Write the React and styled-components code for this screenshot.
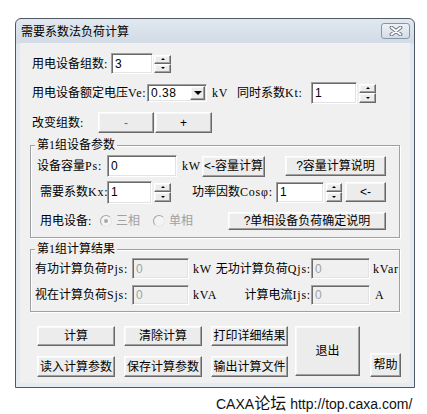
import React from "react";
import styled, { createGlobalStyle, css } from "styled-components";

const GlobalStyle = createGlobalStyle`
  body {
    margin: 0;
    background: #fff;
    font-family: "Liberation Serif", "Noto Sans CJK SC", serif;
  }
`;

const raised = css`
  box-sizing: border-box;
  background: #ececec;
  border: 1px solid;
  border-color: #fff #696969 #696969 #fff;
  box-shadow: inset -1px -1px 0 #a0a0a0, inset 1px 1px 0 #f8f8f8;
`;

const sunken = css`
  box-sizing: border-box;
  border: 1px solid;
  border-color: #a0a0a0 #fff #fff #a0a0a0;
  box-shadow: inset 1px 1px 0 #696969, inset -1px -1px 0 #e3e3e3;
`;

const Page = styled.div`
  width: 427px;
  height: 414px;
  box-sizing: border-box;
  padding: 18px 0 0 15px;
  display: flex;
  flex-direction: column;
`;

const Window = styled.div`
  width: 400px;
  height: 370px;
  box-sizing: border-box;
  border: 1px solid #4f5864;
  border-radius: 6px 6px 0 0;
  padding: 0 4px 4px;
  background: linear-gradient(#e0e7ef 0, #d2dbe6 24px, #e2e8ef 25px, #e6ebf1 100%);
  display: flex;
  flex-direction: column;
`;

const TitleBar = styled.div`
  height: 24px;
  flex: none;
  display: flex;
  justify-content: space-between;
  align-items: flex-start;
`;

const Title = styled.span`
  margin: 5px 0 0 1px;
  font: 12px/14px "Noto Sans CJK SC", sans-serif;
  color: #000;
`;

const CloseBtn = styled.div`
  width: 29px;
  height: 16px;
  margin-top: 4px;
  box-sizing: border-box;
  border: 1px solid #8797a9;
  border-radius: 3px;
  background: linear-gradient(#edf1f5, #d3dce6);
  display: flex;
  align-items: center;
  justify-content: center;
`;

const Client = styled.div`
  flex: 1;
  background: #f0f0f0;
  padding: 10px 0 0 10px;
  display: flex;
  flex-direction: column;
`;

const Row = styled.div`
  display: flex;
  align-items: center;
  flex: none;
  height: ${(p) => p.$h}px;
  margin-top: ${(p) => p.$mt || 0}px;
  padding-left: ${(p) => p.$pl || 0}px;
`;

const Label = styled.span`
  flex: none;
  width: ${(p) => p.$w}px;
  margin-left: ${(p) => p.$ml || 0}px;
  text-align: ${(p) => (p.$right ? "right" : "left")};
  font-size: 12px;
  line-height: 14px;
  white-space: nowrap;
  color: #000;
`;

/* latin part of a label: half-width like the original bitmap font */
const Lat = styled.span`
  font-family: "Liberation Serif", serif;
  letter-spacing: 0.8px;
`;

const Field = styled.input`
  ${sunken};
  flex: none;
  width: ${(p) => p.$w}px;
  height: ${(p) => p.$h}px;
  margin: 0 0 0 ${(p) => p.$ml || 0}px;
  padding: 0 0 0 3px;
  background: #fff;
  font: 12px "Liberation Sans", sans-serif;
  color: #000;
  outline: none;
  &:disabled {
    background: #f0f0f0;
    color: #a0a0a0;
  }
`;

const SpinBox = styled.div`
  flex: none;
  width: ${(p) => p.$w}px;
  height: ${(p) => p.$h}px;
  margin-left: ${(p) => p.$ml || 0}px;
  display: flex;
  flex-direction: column;
`;

const SpinHalf = styled.div`
  ${raised};
  flex: 1;
  display: flex;
  align-items: center;
  justify-content: center;
`;

const Arrow = styled.span`
  width: 0;
  height: 0;
  border-left: ${(p) => p.$size}px solid transparent;
  border-right: ${(p) => p.$size}px solid transparent;
  ${(p) =>
    p.$up
      ? `border-bottom: ${p.$size}px solid #000;`
      : `border-top: ${p.$size}px solid #000;`}
`;

const Combo = styled.div`
  ${sunken};
  flex: none;
  width: 60px;
  height: 18px;
  background: #fff;
  display: flex;
  align-items: stretch;
  padding: 1px;
`;

const ComboText = styled.span`
  flex: 1;
  padding-left: 2px;
  font: 12px/14px "Liberation Sans", sans-serif;
  letter-spacing: 0.5px;
  display: flex;
  align-items: center;
`;

const ComboBtn = styled.div`
  ${raised};
  width: 15px;
  display: flex;
  align-items: center;
  justify-content: center;
`;

const Btn = styled.button`
  ${raised};
  flex: none;
  width: ${(p) => p.$w}px;
  height: ${(p) => p.$h}px;
  margin-left: ${(p) => p.$ml || 0}px;
  align-self: ${(p) => p.$align || "auto"};
  padding: 0;
  font: 12px/14px "Liberation Sans", "Noto Sans CJK SC", sans-serif;
  color: ${(p) => (p.$faint ? "#6a6a6a" : "#000")};
  display: flex;
  align-items: center;
  justify-content: center;
`;

const Group = styled.fieldset`
  flex: none;
  width: 370px;
  min-width: 0;
  box-sizing: border-box;
  margin: ${(p) => p.$mt}px 0 0;
  padding: ${(p) => p.$pt}px 0 ${(p) => p.$pb}px;
  border: 1px solid #a0a0a0;
  box-shadow: inset 1px 1px 0 #fff, 1px 1px 0 #fff;
`;

const Legend = styled.legend`
  margin-left: 4px;
  padding: 0 2px;
  font-size: 12px;
  line-height: 14px;
  background: #f0f0f0;
  color: #000;
`;

const RadioDot = styled.span`
  flex: none;
  width: 12px;
  height: 12px;
  box-sizing: border-box;
  border-radius: 50%;
  border: 1px solid;
  border-color: #a4a4a4 #e6e6e6 #e6e6e6 #a4a4a4;
  background: #f4f4f4;
  display: flex;
  align-items: center;
  justify-content: center;
  &::after {
    content: "";
    width: 4px;
    height: 4px;
    border-radius: 50%;
    background: ${(p) => (p.$on ? "#a8a8a8" : "transparent")};
  }
`;

const Radio = styled.label`
  flex: none;
  width: ${(p) => p.$w}px;
  display: flex;
  align-items: center;
  gap: 4px;
  font-size: 12px;
  line-height: 14px;
  color: #a0a0a0;
`;

const ButtonArea = styled.div`
  display: flex;
  align-items: flex-start;
  margin-top: 14px;
  padding-left: 7px;
`;

const ButtonGrid = styled.div`
  display: grid;
  grid-template-columns: 78px 78px 77px;
  grid-template-rows: 20px 21px;
  column-gap: 9px;
  row-gap: 10px;
`;

const Watermark = styled.div`
  margin: 2px 0 0 201px;
  font: 14px/20px "Liberation Sans", sans-serif;
  color: #111;
  white-space: nowrap;
`;

const Cjk = styled.span`
  font: 16px "Noto Sans CJK SC", sans-serif;
  margin-right: 4px;
`;

const Spin = ({ w = 17, h = 18, ml = 1 }) => (
  <SpinBox $w={w} $h={h} $ml={ml}>
    <SpinHalf>
      <Arrow $up $size={2} />
    </SpinHalf>
    <SpinHalf>
      <Arrow $size={2} />
    </SpinHalf>
  </SpinBox>
);

const CloseIcon = () => (
  <svg width="14" height="10" viewBox="0 0 14 10">
    <path d="M2.5 1.5 L11.5 8.5 M11.5 1.5 L2.5 8.5" stroke="#6b7785" strokeWidth="3.8" strokeLinecap="round" />
    <path d="M2.5 1.5 L11.5 8.5 M11.5 1.5 L2.5 8.5" stroke="#fff" strokeWidth="1.9" strokeLinecap="round" />
  </svg>
);

export default function App() {
  return (
    <Page>
      <GlobalStyle />
      <Window>
        <TitleBar>
          <Title>需要系数法负荷计算</Title>
          <CloseBtn>
            <CloseIcon />
          </CloseBtn>
        </TitleBar>
        <Client>
          <Row $h={21} $pl={2}>
            <Label $w={79}>用电设备组数<Lat>:</Lat></Label>
            <Field $w={42} $h={21} defaultValue="3" />
            <Spin />
          </Row>
          <Row $h={22} $mt={8} $pl={2}>
            <Label $w={115}>用电设备额定电压<Lat>Ve:</Lat></Label>
            <Combo>
              <ComboText>0.38</ComboText>
              <ComboBtn>
                <Arrow $size={4} />
              </ComboBtn>
            </Combo>
            <Label $w={20} $ml={5}><Lat>kV</Lat></Label>
            <Label $w={74} $ml={5}>同时系数<Lat>Kt:</Lat></Label>
            <Field $w={46} $h={22} defaultValue="1" />
            <Spin h={19} ml={2} />
          </Row>
          <Row $h={21} $mt={8} $pl={2}>
            <Label $w={66}>改变组数<Lat>:</Lat></Label>
            <Btn $w={56} $h={21} $faint>-</Btn>
            <Btn $w={57} $h={21} $ml={1}>+</Btn>
          </Row>

          <Group $mt={5} $pt={3} $pb={7}>
            <Legend>第1组设备参数</Legend>
            <Row $h={22} $pl={6}>
              <Label $w={70}>设备容量<Lat>Ps:</Lat></Label>
              <Field $w={70} $h={22} defaultValue="0" />
              <Label $w={20} $ml={5}><Lat>kW</Lat></Label>
              <Btn $w={63} $h={21}>&lt;-容量计算</Btn>
              <Btn $w={101} $h={20} $ml={20}>?容量计算说明</Btn>
            </Row>
            <Row $h={24} $mt={3} $pl={6}>
              <Label $w={67} $ml={3}>需要系数<Lat>Kx:</Lat></Label>
              <Field $w={45} $h={23} defaultValue="1" />
              <Spin h={19} ml={2} />
              <Label $w={84} $ml={21}>功率因数<Lat>Cosφ:</Lat></Label>
              <Field $w={48} $h={21} defaultValue="1" />
              <Spin w={16} h={19} ml={2} />
              <Btn $w={41} $h={20} $ml={3}>&lt;-</Btn>
            </Row>
            <Row $h={18} $mt={8} $pl={6}>
              <Label $w={60} $ml={3}>用电设备<Lat>:</Lat></Label>
              <Radio $w={53}>
                <RadioDot $on />
                三相
              </Radio>
              <Radio $w={75}>
                <RadioDot />
                单相
              </Radio>
              <Btn $w={158} $h={18}>?单相设备负荷确定说明</Btn>
            </Row>
          </Group>

          <Group $mt={4} $pt={2} $pb={6}>
            <Legend>第1组计算结果</Legend>
            <Row $h={21} $pl={4}>
              <Label $w={97}>有功计算负荷<Lat>Pjs:</Lat></Label>
              <Field $w={57} $h={21} defaultValue="0" disabled />
              <Label $w={22} $ml={4}><Lat>kW</Lat></Label>
              <Label $w={96} $right>无功计算负荷<Lat>Qjs:</Lat></Label>
              <Field $w={59} $h={21} defaultValue="0" disabled />
              <Label $w={30} $ml={3}><Lat>kVar</Lat></Label>
            </Row>
            <Row $h={20} $mt={6} $pl={4}>
              <Label $w={97}>视在计算负荷<Lat>Sjs:</Lat></Label>
              <Field $w={57} $h={20} defaultValue="0" disabled />
              <Label $w={22} $ml={4}><Lat>kVA</Lat></Label>
              <Label $w={96} $right>计算电流<Lat>Ijs:</Lat></Label>
              <Field $w={59} $h={20} defaultValue="0" disabled />
              <Label $w={20} $ml={5}><Lat>A</Lat></Label>
            </Row>
          </Group>

          <ButtonArea>
            <ButtonGrid>
              <Btn $w={78} $h={20}>计算</Btn>
              <Btn $w={78} $h={20}>清除计算</Btn>
              <Btn $w={77} $h={20}>打印详细结果</Btn>
              <Btn $w={78} $h={21}>读入计算参数</Btn>
              <Btn $w={78} $h={21}>保存计算参数</Btn>
              <Btn $w={77} $h={21}>输出计算文件</Btn>
            </ButtonGrid>
            <Btn $w={65} $h={50} $ml={7}>退出</Btn>
            <Btn $w={31} $h={24} $ml={10} $align="flex-end">帮助</Btn>
          </ButtonArea>
        </Client>
      </Window>
      <Watermark>
        CAXA<Cjk>论坛</Cjk>http://top.caxa.com/
      </Watermark>
    </Page>
  );
}
